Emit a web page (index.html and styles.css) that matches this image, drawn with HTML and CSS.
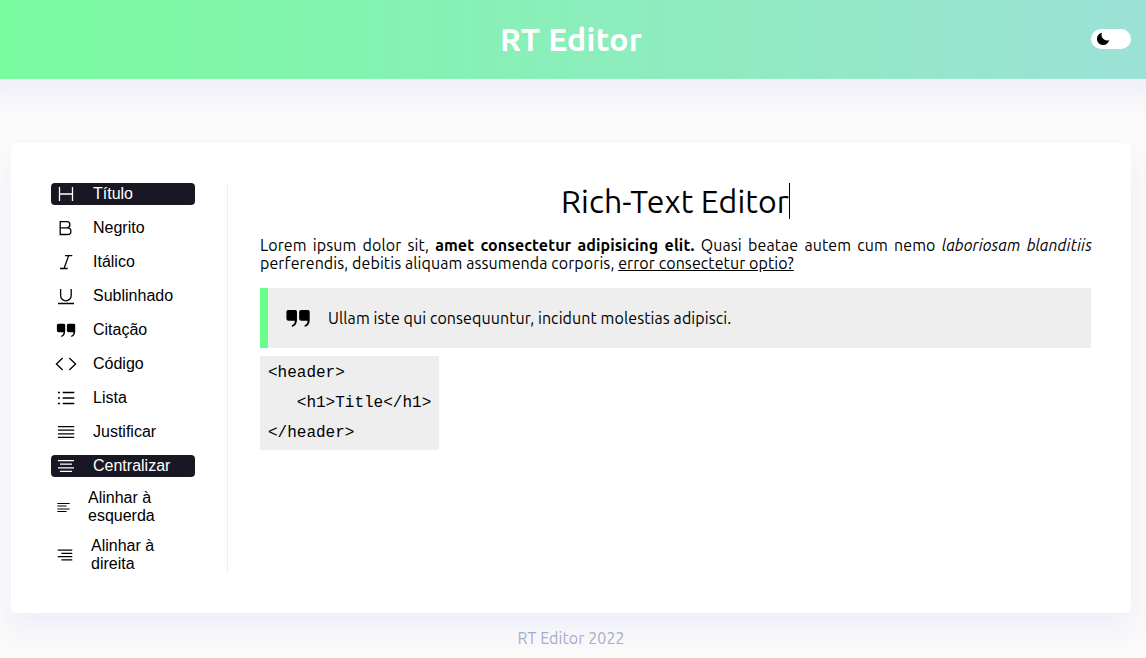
FILE: index.html
```html
<!DOCTYPE html>
<html lang="pt-BR">
<head>
<meta charset="utf-8">
<title>RT Editor</title>
<link rel="stylesheet" href="styles.css">
</head>
<body>
<header class="header">
  <h1 class="brand">RT Editor</h1>
  <button class="toggle" aria-label="Tema"><svg width="14" height="14" viewBox="0 0 14 14"><path d="M6 .8A6.2 6.2 0 1 0 13.2 8 5.5 5.5 0 0 1 6 .8Z"/></svg></button>
</header>
<main class="card">
  <nav class="tools">
    <button class="tool active"><svg class="icon" viewBox="0 0 22 22"><path d="M4.5 4v14M17.5 4v14M4.5 11h13"/></svg>Título</button>
    <button class="tool"><svg class="icon" viewBox="0 0 22 22"><path d="M5.2 4.7h6.6a3.1 3.1 0 0 1 0 6.2H5.2zM5.2 10.9h7.4a3.3 3.3 0 0 1 0 6.6H5.2z"/></svg>Negrito</button>
    <button class="tool"><svg class="icon" viewBox="0 0 22 22"><path d="M10 4.6h7.3M5 17.5h7.7M13.7 4.6 9 17.5"/></svg>Itálico</button>
    <button class="tool"><svg class="icon" viewBox="0 0 22 22"><path d="M5.6 4v6.5a5.2 5.2 0 0 0 10.6 0V4M3 18.5h16"/></svg>Sublinhado</button>
    <button class="tool"><svg class="icon solid" viewBox="0 0 22 22"><path id="quote" d="M3.400 4.800h5.500q1.300 0 1.300 1.300v5.900c0 3.400-1.200 5.400-4 5.900v-1.300c1.700-.5 2.300-1.800 2.300-3.400H3.600q-1.700 0-1.700-1.700V6.300q0-1.500 1.500-1.500ZM13.400 4.800h5.500q1.300 0 1.300 1.300v5.900c0 3.400-1.200 5.400-4 5.900v-1.300c1.700-.5 2.300-1.800 2.300-3.400h-4.900q-1.700 0-1.700-1.700V6.300q0-1.500 1.500-1.500Z"/></svg>Citação</button>
    <button class="tool"><svg class="icon" viewBox="0 0 22 22"><path d="m7.700 5-6.300 6 6.300 6M14.300 5l6.300 6-6.300 6"/></svg>Código</button>
    <button class="tool"><svg class="icon" viewBox="0 0 22 22"><path d="M3 5.500h2M7.700 5.500h11.600M3 11h2M7.700 11h11.600M3 16.500h2M7.700 16.500h11.600"/></svg>Lista</button>
    <button class="tool"><svg class="icon" viewBox="0 0 22 22"><path d="M3 5.700h16.300M3 9.200h16.300M3 12.800h16.300M3 16.300h16.300"/></svg>Justificar</button>
    <button class="tool active"><svg class="icon" viewBox="0 0 22 22"><path d="M3 5.700h16M5 9.200h12M3 12.800h16M5 16.300h12"/></svg>Centralizar</button>
    <button class="tool"><svg class="icon small" viewBox="0 0 22 22"><path d="M3 5.700h16M3 9.200h12M3 12.800h16M3 16.300h12"/></svg>Alinhar à esquerda</button>
    <button class="tool"><svg class="icon medium" viewBox="0 0 22 22"><path d="M3 5.700h16M7 9.200h12M3 12.800h16M7 16.300h12"/></svg>Alinhar à direita</button>
  </nav>
  <article class="editor">
    <h2 class="title"><span class="caret">Rich-Text Editor</span></h2>
    <p class="text">Lorem ipsum dolor sit, <b>amet consectetur adipisicing elit.</b> Quasi beatae autem cum nemo <i>laboriosam blanditiis</i> perferendis, debitis aliquam assumenda corporis, <u>error consectetur optio?</u></p>
    <blockquote class="quote"><svg class="mark" viewBox="0 0 22 22"><use href="#quote"/></svg><span>Ullam iste qui consequuntur, incidunt molestias adipisci.</span></blockquote>
    <pre class="code">&lt;header&gt;
   &lt;h1&gt;Title&lt;/h1&gt;
&lt;/header&gt;</pre>
  </article>
</main>
<footer class="footer">RT Editor 2022</footer>
</body>
</html>
```
FILE: styles.css
```css
* { box-sizing: border-box; margin: 0; padding: 0; }
body {
  height: 658px;
  overflow: hidden;
  background: #fafafa;
  color: #000;
  font: 16px/18px Ubuntu, "Noto Sans", sans-serif;
  letter-spacing: 0.085px;
}
.header {
  display: grid;
  grid-template-columns: 1fr auto 1fr;
  align-items: center;
  height: 79px;
  margin: 0 -24px;
  padding: 0 39px 0 35px;
  background: linear-gradient(90deg, #79fb9f 24px, #9ce1d6 calc(100% - 24px));
  box-shadow: 0 16px 24px rgba(108, 99, 255, .08);
}
.brand {
  grid-column: 2;
  color: #fff;
  font-size: 32px;
  line-height: 37px;
  letter-spacing: 0.25px;
}
.toggle {
  justify-self: end;
  display: flex;
  align-items: center;
  width: 40px;
  height: 20px;
  margin-bottom: 1px;
  padding-left: 5px;
  border: 0;
  border-radius: 10px;
  background: #fff;
}
.card {
  display: flex;
  height: 470px;
  margin: 64px 15px 0 11px;
  padding: 40px;
  border-radius: 6px;
  background: #fff;
  box-shadow: 0 16px 24px rgba(108, 99, 255, .08);
}
.tools {
  display: flex;
  flex-direction: column;
  gap: 12px;
  width: 177px;
  padding-right: 32px;
  border-right: 1px solid #eee;
}
.tool {
  display: flex;
  align-items: center;
  gap: 16px;
  min-height: 22px;
  padding-left: 4px;
  border: 0;
  border-radius: 4px;
  background: none;
  color: #000;
  font: 16px/18px "Liberation Sans", Arial, sans-serif;
  text-align: left;
}
.tool.active { background: #191724; color: #fff; }
.icon {
  flex: none;
  width: 22px;
  height: 22px;
  fill: none;
  stroke: currentColor;
  stroke-width: 1.3;
}
.icon.solid { fill: currentColor; stroke: none; }
.icon.small { width: 17px; height: 17px; }
.icon.medium { width: 20px; height: 20px; }
.editor {
  flex: 1;
  padding-left: 32px;
}
.title {
  height: 37px;
  font-size: 32px;
  font-weight: 400;
  line-height: 37px;
  letter-spacing: 0.1px;
  text-align: center;
}
.caret { display: inline-block; height: 36px; border-right: 1px solid #000; }
.text { margin: 16px -1px 16px 0; text-align: justify; }
.quote {
  display: flex;
  align-items: center;
  gap: 16px;
  height: 60px;
  padding-left: 16px;
  border-left: 8px solid #66ff8b;
  background: #eee;
}
.mark { width: 28px; height: 28px; }
.code {
  width: max-content;
  height: 94px;
  margin-top: 8px;
  padding: 2px 8px 0;
  background: #eee;
  font: 16px/30px "Liberation Mono", monospace;
  letter-spacing: 0;
}
.footer {
  margin-top: 16px;
  padding-right: 4px;
  color: #a4adca;
  text-align: center;
}
```
